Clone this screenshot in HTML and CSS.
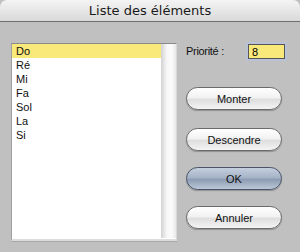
FILE: index.html
```html
<!DOCTYPE html>
<html lang="fr">

<head>
    <meta charset="UTF-8">
    <title>Liste des éléments</title>
    <link rel="stylesheet" href="styles.css">
</head>

<body>
    <div class="window">
        <div class="titlebar">Liste des éléments</div>
        <div class="content">
            <div class="listbox">
                <ul class="items">
                    <li class="selected">Do</li>
                    <li>Ré</li>
                    <li>Mi</li>
                    <li>Fa</li>
                    <li>Sol</li>
                    <li>La</li>
                    <li>Si</li>
                </ul>
                <div class="scrollbar"></div>
            </div>
            <div class="side">
                <div class="priority">
                    <label for="prio">Priorité :</label>
                    <input type="text" id="prio" value="8">
                </div>
                <button class="btn btn-first">Monter</button>
                <button class="btn">Descendre</button>
                <button class="btn btn-default">OK</button>
                <button class="btn">Annuler</button>
            </div>
        </div>
    </div>
</body>

</html>
```
FILE: styles.css
```css
:root {
    --window-bg: #c0c0c0;
    --text-color: #111;
    --select-color: #f9e97a;
    --font-family: "Liberation Sans", Arial, sans-serif;
    --title-font: "DejaVu Sans", sans-serif;
}

* {
    box-sizing: border-box;
}

body {
    margin: 0;
    font-family: var(--font-family);
    color: var(--text-color);
    background: var(--window-bg);
}

.window {
    width: 300px;
    height: 252px;
    background: var(--window-bg);
    border-radius: 7px 7px 0 0;
    overflow: hidden;
}

.titlebar {
    height: 22px;
    background: linear-gradient(#f4f4f4, #d9d9d9);
    border-bottom: 1px solid #6e6e6e;
    text-align: center;
    font-family: var(--title-font);
    font-size: 13px;
    line-height: 21px;
    color: #1a1a1a;
}

.content {
    display: flex;
    padding: 21px 0 0 11px;
}

.listbox {
    display: flex;
    width: 166px;
    height: 198px;
    background: #fff;
    border-top: 1px solid #8a8a8a;
    border-left: 1px solid #a0a0a0;
    border-right: 1px solid #d8d8d8;
    border-bottom: 2px solid #dcdcdc;
    box-shadow: 0 1px 0 #a8a8a8;
}

.items {
    flex: 1;
    list-style: none;
    margin: 0;
    padding: 0;
    font-size: 11px;
}

.items li {
    height: 14px;
    line-height: 14px;
    padding-left: 4px;
}

.items li.selected {
    background: var(--select-color);
}

.scrollbar {
    width: 15px;
    height: 194px;
    background: linear-gradient(to right, #d2d2d2, #f7f7f7 40%, #fbfbfb 70%, #e8e8e8);
}

.side {
    display: flex;
    flex-direction: column;
    margin-left: 9px;
    width: 96px;
}

.priority {
    display: flex;
    justify-content: space-between;
    align-items: flex-start;
    height: 44px;
    font-size: 11px;
}

.priority label {
    margin-top: 2px;
    letter-spacing: -0.3px;
}

.priority input {
    width: 37px;
    height: 15px;
    margin: 1px -3px 0 0;
    padding: 0 0 0 3px;
    font-family: var(--font-family);
    font-size: 11px;
    color: #000;
    background: var(--select-color);
    border: 1px solid #555;
    outline: 2px solid #b9c2d6;
}

.btn {
    height: 23px;
    margin-bottom: 16px;
    font-family: var(--font-family);
    font-size: 11px;
    color: #111;
    border: 1px solid #6a6a6a;
    border-radius: 12px;
    background: linear-gradient(#ffffff, #f2f2f2 45%, #dedede 55%, #f4f4f4);
    box-shadow: 0 1px 1px rgba(0, 0, 0, 0.25);
    cursor: pointer;
}

.btn-first {
    margin-bottom: 18px;
}

.btn-default {
    border-color: #4a5468;
    background: linear-gradient(#c4cfde, #a7b4c8 45%, #8d9cb3 55%, #bcc8d8);
}
```
